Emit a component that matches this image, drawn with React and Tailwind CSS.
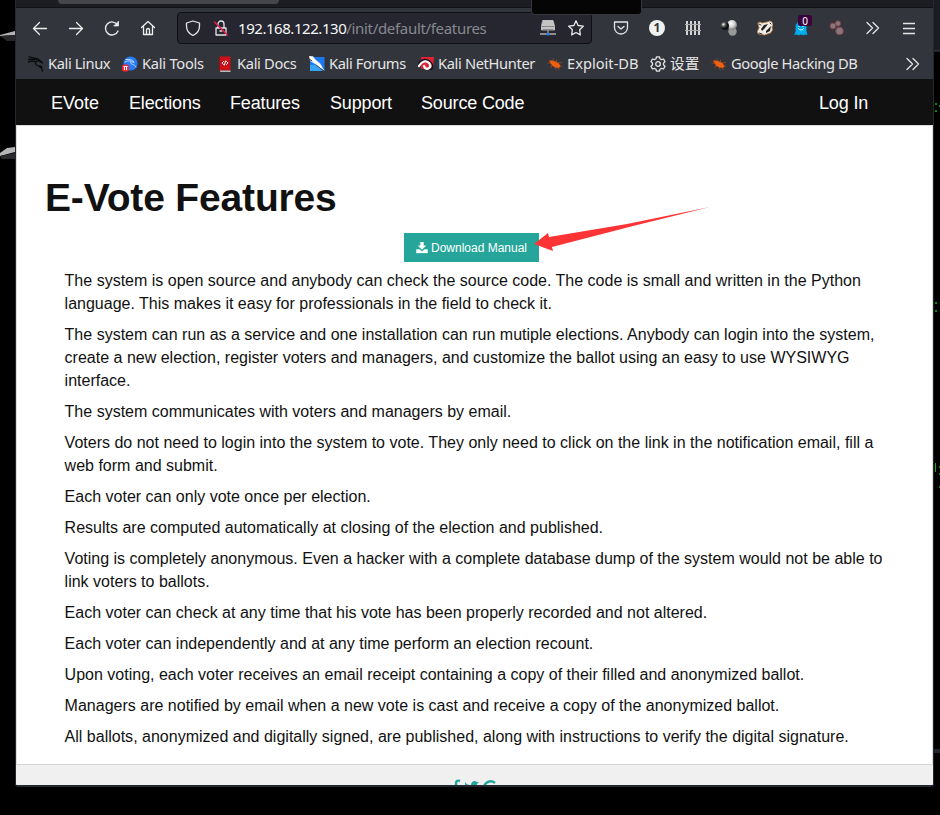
import React from "react";

const paragraphs = [
  ["The system is open source and anybody can check the source code. The code is small and written in the Python", "language. This makes it easy for professionals in the field to check it."],
  ["The system can run as a service and one installation can run mutiple elections. Anybody can login into the system,", "create a new election, register voters and managers, and customize the ballot using an easy to use WYSIWYG", "interface."],
  ["The system communicates with voters and managers by email."],
  ["Voters do not need to login into the system to vote. They only need to click on the link in the notification email, fill a", "web form and submit."],
  ["Each voter can only vote once per election."],
  ["Results are computed automatically at closing of the election and published."],
  ["Voting is completely anonymous. Even a hacker with a complete database dump of the system would not be able to", "link voters to ballots."],
  ["Each voter can check at any time that his vote has been properly recorded and not altered."],
  ["Each voter can independently and at any time perform an election recount."],
  ["Upon voting, each voter receives an email receipt containing a copy of their filled and anonymized ballot."],
  ["Managers are notified by email when a new vote is cast and receive a copy of the anonymized ballot."],
  ["All ballots, anonymized and digitally signed, are published, along with instructions to verify the digital signature."],
];

function Icon({ children, className = "", size = 16, fill = "none" }) {
  return (
    <svg width={size} height={size} viewBox="0 0 16 16" fill={fill} stroke="currentColor" strokeWidth="1.3" strokeLinecap="round" strokeLinejoin="round" className={"block shrink-0 " + className}>
      {children}
    </svg>
  );
}

const Spider = () => (
  <Icon className="text-[#f05f0e]">
    <path d="m2 4.500 3 0 3 1 3.500 1.500 2 3-1.500 2-3.500-.500-3-1.500-2-3z" fill="currentColor" stroke="none" />
    <path d="M1 7l4 .5M6 3l1.500 3M9.500 4l0 3M11 7l3.500-.5M12 9.500l2.500 1M5 9l-1 2.500M8 11l1 2.500M11 11l1 2.500" strokeWidth=".7" opacity=".65" />
  </Icon>
);
const Chevrons = () => (
  <Icon><path d="m2 2.500 5.500 5.500L2 13.500M8 2.500l5.500 5.500L8 13.500" /></Icon>
);

const bookmarks = [
  { label: "Kali Linux", box: "w-[94px] tracking-[-0.38px]", icon: (
    <Icon className="text-[#08090b]"><path d="M1 .8c2 1.200 5 1 7 1.700 2 .5 3.500 1.500 5.500 3.500C10 4 7 5 7.500 7.500c.5 3 6 1.500 7 7.500M0 3.500c3-.3 5-.5 8 .2M.5 6c2-1 4-1.200 6-.7M11 5l3.500 2M12 10l2 1" strokeWidth="1.300" /></Icon>
  ) },
  { label: "Kali Tools", box: "w-[95px] tracking-[-0.25px]", icon: (
    <Icon><circle cx="8.500" cy="7.500" r="7" fill="#277cf7" stroke="none" /><path d="M4 3.500c4-.5 7 .5 8 3-3-1.500-4 0-3 1s3 .5 5 3.500M3 6c2-1 3-1.300 6-.8" stroke="#c7dcff" strokeWidth="1" /><rect x="0" y="8.500" width="7" height="7" rx="2" fill="#ef2836" stroke="none" /><path d="M1.500 10.500h4M2.500 11v3M4.500 11v3" stroke="#fff" strokeWidth="1" strokeLinecap="butt" /></Icon>
  ) },
  { label: "Kali Docs", box: "w-[92px] tracking-[-0.32px]", icon: (
    <Icon><path d="M2 .5h11.500v14H2z" fill="#cb1017" stroke="none" /><path d="M2.500 14.500h11V16h-10z" fill="#bbb" stroke="none" /><path d="M2.500.5v14" stroke="#8d1116" strokeWidth="1" /><path d="M6.500 5.500 5 7l1.500 1.500M9.500 5.500 11 7 9.500 8.500M8.500 5l-1 4" stroke="#fff" strokeWidth="1" /></Icon>
  ) },
  { label: "Kali Forums", box: "w-[109px] tracking-[-0.38px]", icon: (
    <Icon><path d="M1 1h14.500v14H1z" fill="#1d78ef" stroke="none" /><path d="M1 9h7l5 6H1z" fill="#36a5f8" stroke="none" /><path d="m0 0 4 .5 2 3 5 4 4 7-5-3-4-4-4-2z" fill="#fff" stroke="#e8eef7" strokeWidth=".5" /><path d="m7 9 8 6M0 3l3 2" stroke="#333a46" strokeWidth="1" /></Icon>
  ) },
  { label: "Kali NetHunter", box: "w-[129px] tracking-[-0.35px]", icon: (
    <Icon><path d="M3 1h13l-1 12H3z" fill="#df2235" stroke="none" /><path d="M0 8C4 3 8 2.500 12 5.500c4 4 3 7.500 0 8" stroke="#16161a" strokeWidth="1.700" /><path d="M1 10C4 5 8 4 11 7c3.500 4-1 7-4 5l-1-2" stroke="#f9f9f9" strokeWidth="2.300" /></Icon>
  ) },
  { label: "Exploit-DB", box: "w-[103px]", icon: <Spider /> },
  { label: "设置", box: "w-[61px]", icon: (
    <Icon><circle cx="8" cy="8" r="2.300" /><path d="m6.500.8-.5 2-1.500.8-2-.6L1 5.500l1.500 1.700v1.600L1 10.500 2.500 13l2-.6 1.500.8.5 2h3l.5-2 1.500-.8 2 .6 1.500-2.500-1.500-1.700V7.200L15 5.500 13.500 3l-2 .6-1.500-.8-.5-2z" /></Icon>
  ) },
  { label: "Google Hacking DB", box: "w-[160px] tracking-[-0.39px]", icon: <Spider /> },
];

function Browser() {
  return (
    <header className="h-[79px] shrink-0 bg-[#33353c] font-['Noto_Sans','Noto_Sans_CJK_SC',sans-serif] text-[#e5e5e6]">
      <div className="flex h-2 items-start border-b border-[#111217] bg-[#1c1d22]">
        <div className="ml-[42px] h-1 w-[221px] rounded-b bg-[#45464c]" />
      </div>
      <div className="flex h-10 items-center">
        <div className="ml-4 flex w-[124px] justify-between text-[#eeeeef]">
          <Icon><path d="M14.500 8.500h-13M7.500 2.500l-6 6 6 6" /></Icon>
          <Icon><path d="M1.500 8.500h13m-6-6 6 6-6 6" /></Icon>
          <Icon><path d="M13.500 5A6.500 6.500 0 1 0 14 11" /><path d="M14.500 1.500v4.500H10z" fill="currentColor" strokeWidth=".7" /></Icon>
          <Icon><path d="m1.500 7.500 6.500-6 6.500 6M3.500 6.500v8h9v-8M6.500 14.500V10a1.500 1.500 0 0 1 3 0v4.500" /></Icon>
        </div>
        <div className="ml-[21px] flex h-8 w-[415px] items-center rounded border border-[#0e0f14] bg-[#25262f] px-[7px]">
          <Icon><path d="M8 1 1.500 3v3c0 4 2 7.500 6.500 9.500 4.500-2 6.500-5.500 6.500-9.500V3z" /></Icon>
          <Icon className="ml-3"><path d="M3 8h10v7H3zM5 8V4a3 3 0 0 1 6 0v4M7 11h2" /><path d="m1.500 2 13 13" stroke="#e51c4b" strokeWidth="1.500" /></Icon>
          <div className="ml-[9px] w-[302px] whitespace-nowrap text-[15px] leading-6 tracking-[-0.32px] text-[#88898f]"><span className="tracking-[-0.45px] text-[#f7f7f8]">192.168.122.130</span>/init/default/features</div>
          <Icon><path d="M3 .5h10l1.500 5.500v4h-13V6z" fill="#c4c4c4" stroke="#dedede" strokeWidth=".7" /><path d="M2 6.500h12M3 9.500h10" stroke="#777" strokeWidth=".8" /><path d="M0 14h16" stroke="#8c8c8c" strokeWidth="2" /><path d="M8 10v3" stroke="#999" /><path d="M7 13.500h2v1.500H7z" fill="#217cff" stroke="#217cff" strokeWidth=".8" /></Icon>
          <Icon className="ml-3"><path d="m8 .8 2.100 4.700 5.200.7-3.700 3.500.8 5.200L8 12.500l-4.400 2.400.8-5.200L.7 6.200l5.200-.7z" /></Icon>
        </div>
        <div className="ml-[21px] flex w-[304px] items-center justify-between">
          <Icon><path d="M1.500 2h13v5.500a6.500 6.500 0 0 1-13 0zM5 6.500 8 9l3-2.500" /></Icon>
          <span className="flex size-4 items-center justify-center rounded-full bg-[#f1f1f1] text-[12px] leading-4 font-bold text-[#33353c]">1</span>
          <Icon><path d="M2 1v14M6 1v14M10 1v14M14 1v14" stroke="#d4d4d4" strokeWidth="2" strokeLinecap="butt" /><path d="M0 4.500h16M0 10.500h16" stroke="#aaa" strokeWidth="1" strokeLinecap="butt" /></Icon>
          <Icon><defs><radialGradient id="silver" cx="40%" cy="35%" r="65%"><stop stopColor="#fff" /><stop offset=".55" stopColor="#d0d0d0" /><stop offset="1" stopColor="#777" /></radialGradient><radialGradient id="shade" cx="30%" cy="30%"><stop stopColor="#fff" /><stop offset=".4" stopColor="#777" /><stop offset="1" stopColor="#111" /></radialGradient></defs><g fill="url(#silver)" stroke="none"><circle cx="11.500" cy="11.500" r="4.200" fill="#999" /><circle cx="11" cy="5" r="5" /><circle cx="4" cy="6" r="4" fill="url(#shade)" /></g></Icon>
          <Icon><path d="m1 3 2-1 2 1 5-1 3-1 2 1 1 3-1 2 .5 3-2 3-6 2-6-1-1.500-2L2 8z" fill="#f0ede7" stroke="#bd783c" strokeWidth=".8" /><path d="m4 9 3-4 4-1-3 4-3 3zM9 11l5-5-1 5-4 2z" fill="#222" stroke="none" /><path d="m2 4 2 1M13 3l1 1M2 13l3 1" stroke="#333" strokeWidth="1" /></Icon>
          <span className="relative">
            <Icon><path d="M3 11V6.500a5 5 0 0 1 10 0V11l1 3.500-2-.5-1.500 1L8 14l-2.500 1L4 14l-2 .5z" fill="#00adf0" stroke="#00adf0" strokeWidth=".8" /><path d="M6 6v.5M10 6v.5M5.500 8.500c1 2 4 2 5 0" stroke="#fff" strokeWidth="1" /></Icon>
            <span className="absolute -top-[5px] left-[5px] flex h-[11px] w-[14px] items-center justify-center rounded-[2px] bg-[#3a033d] text-[10px] leading-none text-white">0</span>
          </span>
          <Icon><g fill="#88777e" stroke="#7d4248" strokeWidth="1"><circle cx="4" cy="6" r="3" /><circle cx="9" cy="3.500" r="2.700" /><circle cx="10.500" cy="11" r="3.800" /></g></Icon>
          <Chevrons />
          <Icon><path d="M2 3.500h12M2 8.500h12M2 13.500h12" strokeLinecap="butt" /></Icon>
        </div>
      </div>
      <div className="flex h-[31px] items-center pl-3">
        {bookmarks.map(({ label, box, icon }) => (
          <div key={label} className={"flex shrink-0 items-center gap-1 text-[14.670px] leading-5 whitespace-nowrap " + box}>{icon}<span className="-mt-0.5">{label}</span></div>
        ))}
        <div className="ml-[34px]"><Chevrons /></div>
      </div>
    </header>
  );
}

export default function App() {
  return (
    <main className="relative h-[815px] w-[940px] overflow-hidden bg-black font-['Liberation_Sans',Arial,sans-serif] text-[#111]">
      <svg className="absolute inset-0" width="940" height="815" viewBox="0 0 940 815">
        <path d="m0 35 15-4v4L0 36z" fill="#b3b3b3" /><path d="m0 36 15-1v6H7z" fill="#27272a" />
        <path d="m0 153 7-5 8-1v5L0 156z" fill="#b5b5b5" /><path d="m0 156 15-3v6H2z" fill="#29292b" />
        <path d="M934 0h6v51h-6z" fill="#1a1c22" /><path d="M934 51h6" stroke="#3e4045" />
        <path d="M935 104h2m-2 7h2M939 106h1m-5 197h2m-2 8h2m2 156h1m-1 7h1m-1 13h1" stroke="#078d16" strokeWidth="2" /><path d="M935.500 463v9" stroke="#18ad20" />
        <path d="M934 751h6" stroke="#20232c" strokeWidth="4" />
      </svg>
      <div className="relative ml-[15px] flex h-[787px] w-[919px] flex-col overflow-hidden rounded-b-[3px] border-x border-b-2 border-[#242630] bg-white">
        <Browser />
        <nav className="flex h-[46px] shrink-0 items-center bg-[#111] pt-0.5 pl-[35px] text-lg leading-6 tracking-[-0.16px] text-white">
          <span className="w-[78px] tracking-normal">EVote</span><span className="w-[101px]">Elections</span><span className="w-[100px]">Features</span><span className="w-[91px]">Support</span><span className="w-[398px]">Source Code</span><span>Log In</span>
        </nav>
        <section className="h-[639px] shrink-0 border-x border-t border-[#ddd] px-7 pt-[45px]">
          <h1 className="h-[62px] text-[39px] leading-[54px] font-bold tracking-[-0.16px] whitespace-nowrap">E-Vote Features</h1>
          <button className="ml-[359px] flex h-[29px] w-[135px] items-center justify-center gap-[3px] bg-[#26a69a] text-xs whitespace-nowrap text-white">
            <Icon size={12} fill="currentColor"><path d="M6 0h4v5h3L8 10 3 5h3zM.5 10h4L8 12.500l3.500-2.500h4v4.500H.5z" strokeWidth=".5" /></Icon><span>Download Manual</span>
          </button>
          <div className="mt-[7px] ml-[19.600px] flex flex-col gap-2 text-base leading-[23px] tracking-[0.005px]">
            {paragraphs.map((lines) => (
              <p key={lines[0]}>{lines.map((line) => <span key={line} className="block whitespace-nowrap">{line}</span>)}</p>
            ))}
          </div>
        </section>
        <footer className="flex h-[21px] shrink-0 justify-center overflow-hidden border-t border-[#d5d5d5] bg-[#f0f0f0] pt-[14px] text-[#26a69a]">
          <svg width="44" height="18" viewBox="0 0 44 18" fill="none" stroke="currentColor" strokeWidth="2.500"><path d="M7 2C4 1 3 2 3 5v9M0 8h7M42 4c-5-4-11 0-11 5 0 6 6 8 11 3V9h-5" /><path d="M12 3c2 3 4 3 6 3 0-4 4-5 6-3h2l-2 2c0 8-8 11-12 8l4-2c-3-1-4-4-4-8z" fill="currentColor" stroke="none" /></svg>
        </footer>
      </div>
      <div className="absolute top-0 left-[531px] h-[15px] w-[111px] rounded-b border border-t-0 border-[#35363a] bg-[#050506]" />
      <svg className="pointer-events-none absolute top-[205px] left-[533px]" width="180" height="46" viewBox="0 0 180 46"><path d="m1 39 14-11 1 4 78-13 83-17-77 19-81 21 1 4z" fill="#fd3436" /></svg>
    </main>
  );
}
